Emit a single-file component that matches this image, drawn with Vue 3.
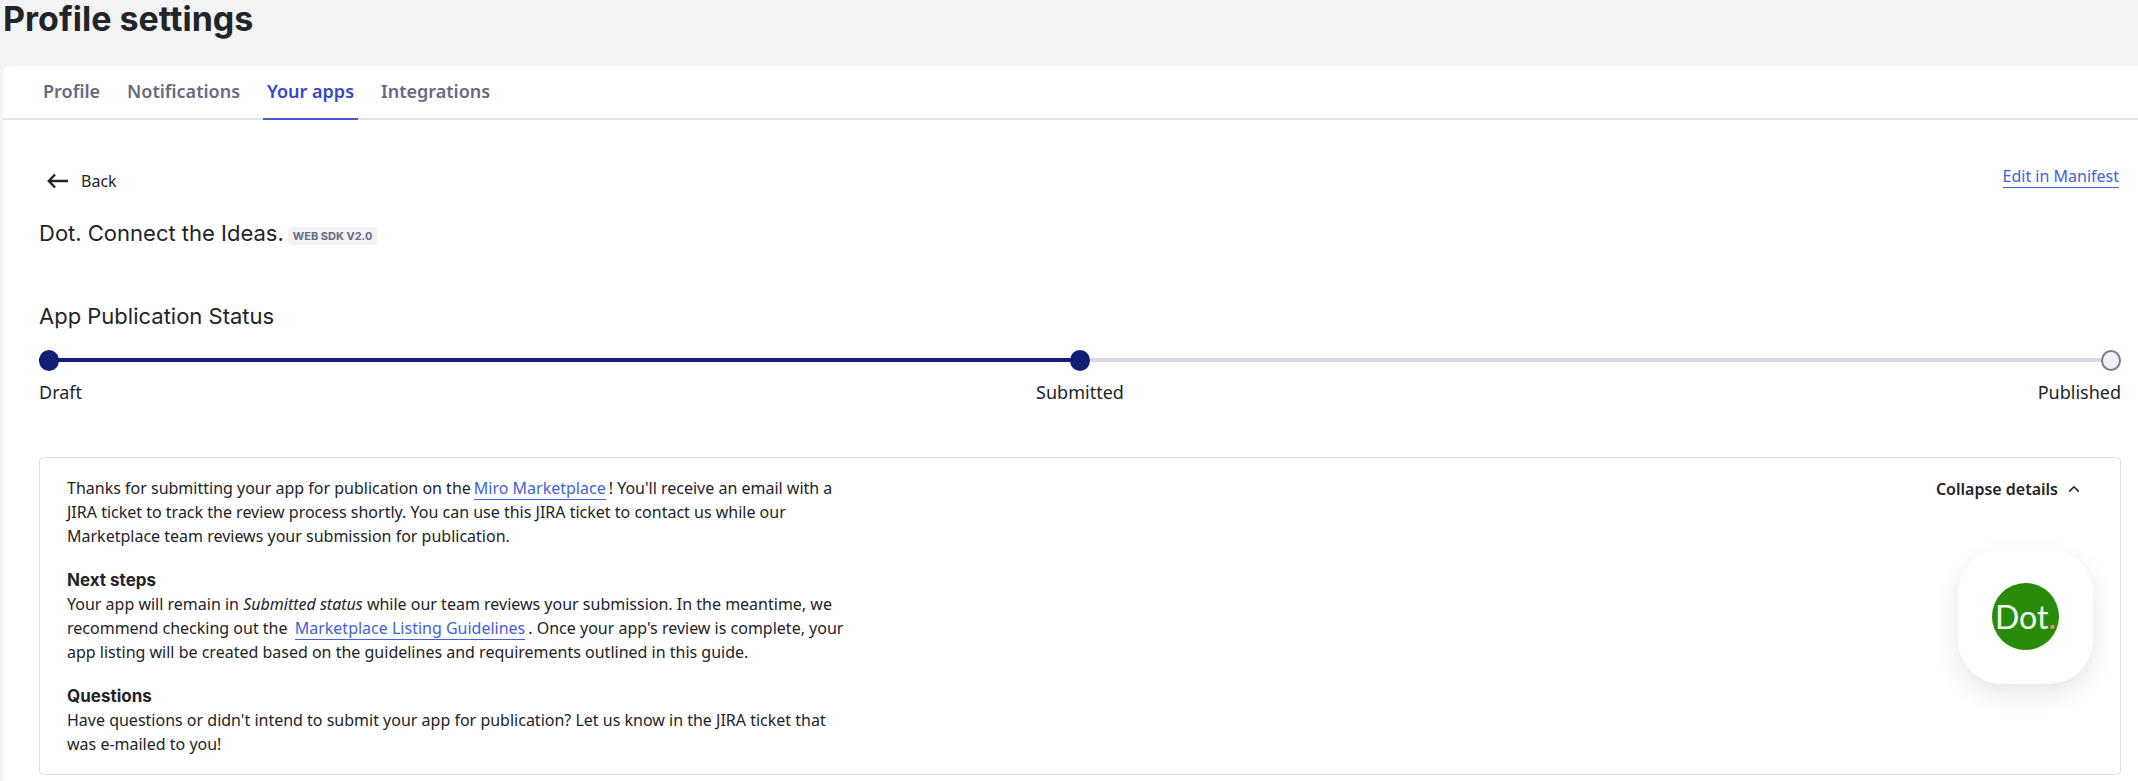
<script setup>
import { ref } from 'vue'

const tabs = ['Profile', 'Notifications', 'Your apps', 'Integrations']
const active = ref('Your apps')
const steps = [
  { label: 'Draft', done: true },
  { label: 'Submitted', done: true },
  { label: 'Published', done: false },
]
const open = ref(true)
</script>

<template>
  <div class="page">
    <h1>Profile settings</h1>
    <main class="panel">
      <nav class="tabs">
        <button
          v-for="tab in tabs"
          :key="tab"
          type="button"
          class="tab"
          :class="{ active: tab === active }"
          @click="active = tab"
        >{{ tab }}</button>
      </nav>

      <div class="content">
        <div class="toolbar">
          <button type="button" class="back">
            <svg width="22" height="16" viewBox="0 0 22 16" fill="none" stroke="currentColor" stroke-width="2.4">
              <path d="M21 8H2M8 1.5L1.8 8L8 14.5" />
            </svg>
            Back
          </button>
          <a href="#manifest" class="link">Edit in Manifest</a>
        </div>

        <div class="app-name">
          <h2>Dot. Connect the Ideas.</h2>
          <span class="badge">WEB SDK V2.0</span>
        </div>

        <h2 class="status-title">App Publication Status</h2>
        <ol class="steps">
          <li v-for="step in steps" :key="step.label" :class="{ done: step.done }">
            <span class="dot"></span>
            <span>{{ step.label }}</span>
          </li>
        </ol>

        <section class="card">
          <div class="details">
            <p>
              Thanks for submitting your app for publication on the<a href="#marketplace" class="link inline">Miro Marketplace</a>! You'll receive an email with a JIRA ticket to track the review process shortly. You can use this JIRA ticket to contact us while our Marketplace team reviews your submission for publication.
            </p>
            <h3>Next steps</h3>
            <p>
              Your app will remain in <em>Submitted status</em> while our team reviews your submission. In the meantime, we recommend checking out the <a href="#guidelines" class="link inline">Marketplace Listing Guidelines</a>. Once your app's review is complete, your app listing will be created based on the guidelines and requirements outlined in this guide.
            </p>
            <h3>Questions</h3>
            <p>
              Have questions or didn't intend to submit your app for publication? Let us know in the JIRA ticket that was e-mailed to you!
            </p>
          </div>
          <div class="side">
            <button type="button" class="collapse" :aria-expanded="open" @click="open = !open">
              Collapse details
              <svg width="12" height="8" viewBox="0 0 12 8" fill="none" stroke="currentColor" stroke-width="1.6">
                <path d="M1.2 6.6L6 1.8L10.8 6.6" />
              </svg>
            </button>
            <div class="tile">
              <div class="logo"><span>Dot<i>.</i></span></div>
            </div>
          </div>
        </section>
      </div>
    </main>
  </div>
</template>

<style>
body {
  background: #f1f3f5;
}
</style>

<style scoped>
.page {
  display: flex;
  flex-direction: column;
  min-height: 100vh;
  padding-left: 3px;
  color: #222428;
  font: 16px/24px "Noto Sans", sans-serif;
}
h1, h2, h3, p, ol {
  margin: 0;
  padding: 0;
}
button {
  border: 0;
  padding: 0;
  background: none;
  color: inherit;
  font: inherit;
  cursor: pointer;
}
h1 {
  height: 66px;
  font: 700 34px/38px Inter, sans-serif;
}
.panel {
  flex: 1;
  background: #fff;
  border-top-left-radius: 8px;
}
.tabs {
  display: flex;
  gap: 19px;
  height: 52px;
  padding-left: 36px;
  border-bottom: 2px solid #e1e3e8;
}
.tab {
  height: 54px;
  padding: 0 4px 2px;
  border-bottom: 2px solid transparent;
  color: #656b81;
  font-size: 18px;
  font-weight: 600;
}
.tab.active {
  color: #3449c4;
  border-color: #3f5bd9;
}
.content {
  padding: 45px 17px 8px 36px;
}
.toolbar {
  display: flex;
  justify-content: space-between;
  align-items: flex-start;
  padding-right: 2px;
}
.back {
  display: flex;
  align-items: center;
  gap: 12px;
  padding: 4px 8px;
}
.link {
  color: #4262d9;
  text-decoration: none;
  border-bottom: 1px solid #4262d9;
}
.link.inline {
  margin: 0 3px;
}
.toolbar .link {
  line-height: 22px;
}
.app-name {
  display: flex;
  align-items: center;
  gap: 4px;
  margin-top: 20px;
}
h2 {
  font: 400 22px/32px Inter, sans-serif;
}
.badge {
  margin-top: 6px;
  padding: 0 5px;
  border-radius: 3px;
  background: #f1f2f5;
  color: #656b81;
  font: 700 11px/18px Inter, sans-serif;
}
.status-title {
  margin-top: 51px;
}
.steps {
  display: grid;
  grid-template-columns: 1fr 1fr 1fr;
  margin-top: 18px;
  list-style: none;
  font-size: 18px;
  background: linear-gradient(90deg, #131f75 50%, #dad9e3 50%) 0 8px / 100% 4px no-repeat;
}
.steps li {
  display: flex;
  flex-direction: column;
  align-items: center;
  gap: 9px;
}
.steps li:first-child {
  align-items: flex-start;
}
.steps li:last-child {
  align-items: flex-end;
}
.dot {
  box-sizing: border-box;
  width: 20px;
  height: 21px;
  border: 2px solid #7c7c8e;
  border-radius: 50%;
  background: #f1f2f6;
}
.done .dot {
  border-color: #131f75;
  background: #131f75;
}
.card {
  display: flex;
  justify-content: space-between;
  margin-top: 53px;
  padding: 18px 27px;
  border: 1px solid #e0e1e6;
  border-radius: 4px;
}
.details {
  max-width: 784px;
}
h3 {
  margin-top: 20px;
  font: 700 17px/24px Inter, sans-serif;
}
.side {
  display: flex;
  flex-direction: column;
  align-items: flex-end;
  gap: 48px;
}
.collapse {
  display: flex;
  align-items: center;
  gap: 10px;
  padding: 1px 13px 0 0;
  font-weight: 600;
}
.tile {
  display: grid;
  place-items: center;
  width: 135px;
  height: 135px;
  border-radius: 44px;
  background: #fff;
  box-shadow: 0 10px 24px rgba(5, 0, 56, 0.1);
}
.logo {
  display: grid;
  place-items: center;
  width: 67px;
  height: 67px;
  border-radius: 50%;
  background: #288c0a;
  color: #f2faef;
  font: 400 32px/40px Lato, sans-serif;
}
.logo i {
  color: #e58a8a;
  font-style: normal;
}
</style>
